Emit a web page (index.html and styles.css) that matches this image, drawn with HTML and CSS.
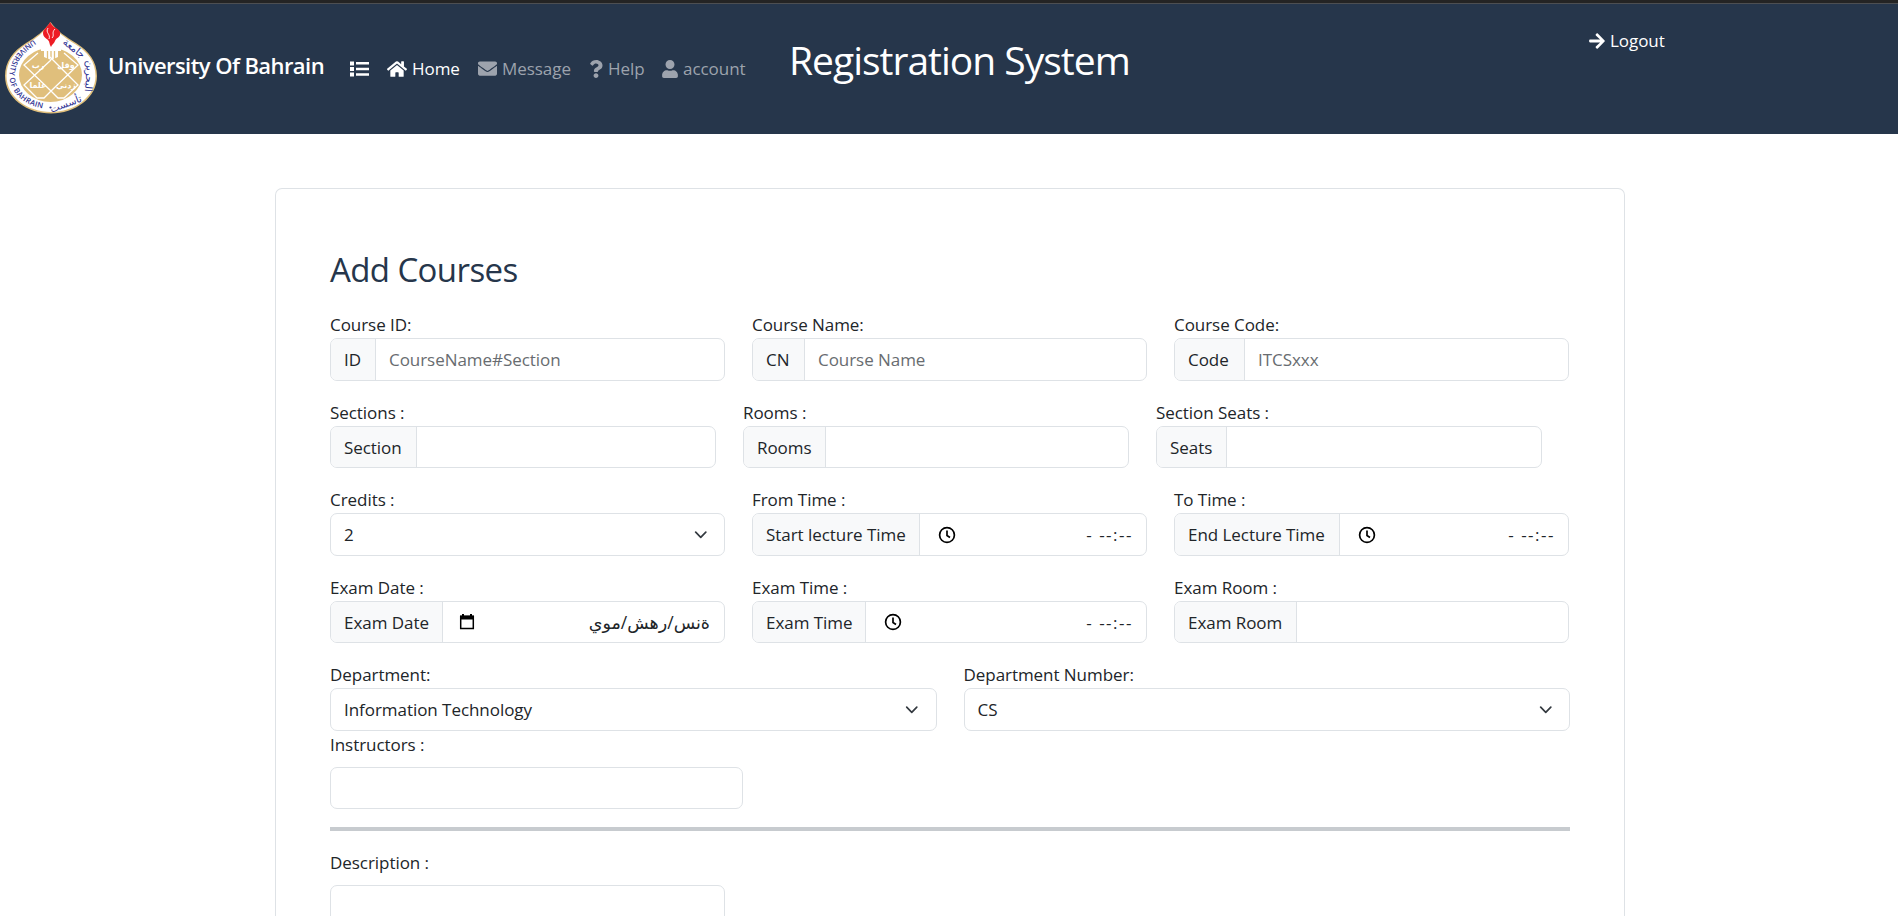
FILE: index.html
```html
<!DOCTYPE html>
<html lang="en">
<head>
<meta charset="utf-8">
<title>Registration System</title>
<link rel="stylesheet" href="styles.css">
</head>
<body>
<header class="navbar">
  <svg class="logo" viewBox="5 22 92 92">
    <path d="M50.5 22C57 31 66 37 76 43C89 51 97 62 97 76C97 98 75 113.500 51 113.500S5 98 5 76C5 62 13 51 26 43C36 37 44 31 50.500 22Z" fill="#e0bf7c"/>
    <path d="M50.5 23C57 32 65 38 75 44C88 52 95.500 62 95.500 76C95.500 97 74 112 51 112S6.500 97 6.500 76C6.500 62 14 52 27 44C37 38 44 32 50.500 23Z" fill="#fff"/>
    <ellipse cx="50.500" cy="75" rx="31.500" ry="27" fill="#e0bf7c"/>
    <path d="M41 47h20v4h-3v6l-7 3-7-3V51h-3z" fill="#fff"/>
    <path d="M47.500 51v8M51 51v8M54.500 51v8" stroke="#e0bf7c" stroke-width="1.300"/>
    <path d="M50 22c2 3 2 3 4 5 4 2 7 4 6 8-1 3-4 3-5 6-1 3-3 3-4 6-2-3-1-5-3-7s-5-3-5-7c0-4 5-6 7-11z" fill="#ed1c24"/>
    <path d="M48 28c-3 5 3 6 1 11M55 29c-4 4 0 6-3 9" fill="none" stroke="#fff" stroke-width=".9"/>
    <g fill="none" stroke="#fff" stroke-width="1.300">
      <path d="M38 53L24 65L51 91L58 98L64 98L78 85L50 57M64 53L78 65L51 91L44 98L37 98L24 85L51 60"/>
    </g>
    <g class="logo-words">
      <text x="66" y="68">وقل</text>
      <text x="38" y="68">رب</text>
      <text x="66" y="88">زدني</text>
      <text x="38" y="88">علما</text>
    </g>
    <path id="ring" d="M34.500 39C20 48 9.500 59 9.500 76C9.500 92 24 107 48 109" fill="none"/>
    <text class="logo-ring"><textPath href="#ring" startOffset="1" textLength="96" lengthAdjust="spacing">UNIVERSITY OF BAHRAIN</textPath></text>
    <circle cx="50.500" cy="107.500" r="1.100" fill="#2e3192"/>
    <g class="logo-arabic">
      <text transform="translate(72 51) rotate(38)">جامعة</text>
      <text transform="translate(86 76) rotate(94)">البحرين</text>
      <text transform="translate(67 107) rotate(-20)">تأسست</text>
    </g>
  </svg>
  <span class="brand">University Of Bahrain</span>
  <nav class="links">
    <a class="on"><svg class="i-list" viewBox="0 0 19 16"><path d="M0 .5h4v4H0zM0 6h4v4H0zM0 11.500h4v4H0zM6 1h13v2.500H6zM6 6.700h13v2.500H6zM6 12.300h13v2.500H6z"/></svg></a>
    <a class="on home"><svg class="i-home" viewBox="0 0 576 512"><path d="M280.370 148.260L96 300.110V464a16 16 0 0 0 16 16l112.060-.29a16 16 0 0 0 15.920-16V368a16 16 0 0 1 16-16h64a16 16 0 0 1 16 16v95.640a16 16 0 0 0 16 16.050L464 480a16 16 0 0 0 16-16V300L295.670 148.260a12.190 12.190 0 0 0-15.300 0zM571.600 251.470L488 182.560V44.050a12 12 0 0 0-12-12h-56a12 12 0 0 0-12 12v72.610L318.470 43a48 48 0 0 0-61 0L4.340 251.470a12 12 0 0 0-1.600 16.900l25.500 31A12 12 0 0 0 45.150 301l235.220-193.740a12.190 12.190 0 0 1 15.300 0L530.900 301a12 12 0 0 0 16.900-1.600l25.500-31a12 12 0 0 0-1.700-16.930z"/></svg>Home</a>
    <a class="message"><svg class="i-mail" viewBox="0 0 512 512"><path d="M502.300 190.800c3.900-3.100 9.700-.2 9.700 4.700V400c0 26.500-21.500 48-48 48H48c-26.500 0-48-21.500-48-48V195.600c0-5 5.700-7.800 9.700-4.700 22.400 17.400 52.100 39.500 154.100 113.600 21.100 15.400 56.700 47.800 92.200 47.600 35.700.3 72-32.800 92.300-47.600 102-74.100 131.600-96.300 154-113.700zM256 320c23.200.4 56.600-29.200 73.400-41.400 132.700-96.300 142.800-104.700 173.400-128.700 5.800-4.500 9.200-11.500 9.200-18.900v-19c0-26.500-21.500-48-48-48H48c-26.500 0-48 21.500-48 48v19c0 7.400 3.400 14.300 9.200 18.900 30.600 23.900 40.700 32.400 173.400 128.700 16.800 12.200 50.200 41.800 73.400 41.400z"/></svg>Message</a>
    <a class="help"><svg class="i-help" viewBox="0 0 384 512"><path d="M202.021 0C122.202 0 70.503 32.703 29.914 91.026c-7.363 10.580-5.093 25.086 5.178 32.874l43.138 32.709c10.373 7.865 25.132 6.026 33.253-4.148 25.049-31.381 43.630-49.449 82.757-49.449 30.764 0 68.816 19.799 68.816 49.631 0 22.552-18.617 34.134-48.993 51.164-35.423 19.860-82.299 44.576-82.299 106.405V320c0 13.255 10.745 24 24 24h72.471c13.255 0 24-10.745 24-24v-5.773c0-42.860 125.268-44.645 125.268-160.627C377.504 66.256 286.902 0 202.021 0zM192 373.459c-38.196 0-69.271 31.075-69.271 69.271 0 38.195 31.075 69.270 69.271 69.270s69.271-31.075 69.271-69.271-31.075-69.270-69.271-69.270z"/></svg>Help</a>
    <a class="account"><svg class="i-user" viewBox="0 0 448 512"><path d="M224 256c70.700 0 128-57.300 128-128S294.700 0 224 0 96 57.300 96 128s57.300 128 128 128zm89.600 32h-16.700c-22.200 10.200-46.900 16-72.900 16s-50.600-5.800-72.900-16h-16.700C60.200 288 0 348.200 0 422.400V464c0 26.500 21.500 48 48 48h352c26.500 0 48-21.500 48-48v-41.600c0-74.200-60.200-134.400-134.400-134.400z"/></svg>account</a>
  </nav>
  <h1 class="title">Registration System</h1>
  <a class="logout"><svg class="i-arrow" viewBox="0 0 448 512"><path d="M190.500 66.900l22.200-22.200c9.400-9.400 24.600-9.400 33.900 0L441 239c9.400 9.400 9.400 24.600 0 33.900L246.600 467.300c-9.400 9.400-24.600 9.400-33.900 0l-22.200-22.200c-9.500-9.500-9.300-25 .4-34.300L311.400 296H24c-13.300 0-24-10.700-24-24v-32c0-13.300 10.700-24 24-24h287.400L190.900 101.200c-9.800-9.300-10-24.800-.4-34.300z"/></svg>Logout</a>
</header>

<main class="card">
  <h2 class="heading">Add Courses</h2>
  <div class="row">
    <div><label>Course ID:</label><div class="group"><span class="addon a-id">ID</span><input class="field" placeholder="CourseName#Section"></div></div>
    <div><label>Course Name:</label><div class="group"><span class="addon a-cn">CN</span><input class="field" placeholder="Course Name"></div></div>
    <div><label>Course Code:</label><div class="group"><span class="addon a-code">Code</span><input class="field" placeholder="ITCSxxx"></div></div>
  </div>
  <div class="row inset">
    <div><label>Sections :</label><div class="group"><span class="addon a-section">Section</span><input class="field"></div></div>
    <div><label>Rooms :</label><div class="group"><span class="addon a-rooms">Rooms</span><input class="field"></div></div>
    <div><label>Section Seats :</label><div class="group"><span class="addon a-seats">Seats</span><input class="field"></div></div>
  </div>
  <div class="row">
    <div><label>Credits :</label><div class="group select"><span>2</span><svg class="chev" viewBox="0 0 16 16"><path d="m2 5 6 6 6-6"/></svg></div></div>
    <div><label>From Time :</label><div class="group"><span class="addon a-start">Start lecture Time</span><div class="field picker"><svg class="clock" viewBox="0 0 18 18"><circle cx="9" cy="9" r="7.400"/><path d="M9 4.500V9.500L12 11.500"/></svg><span class="time">- --:--</span></div></div></div>
    <div><label>To Time :</label><div class="group"><span class="addon a-end">End Lecture Time</span><div class="field picker"><svg class="clock" viewBox="0 0 18 18"><circle cx="9" cy="9" r="7.400"/><path d="M9 4.500V9.500L12 11.500"/></svg><span class="time">- --:--</span></div></div></div>
  </div>
  <div class="row">
    <div><label>Exam Date :</label><div class="group"><span class="addon a-date">Exam Date</span><div class="field picker"><svg class="cal" viewBox="0 0 18 18"><path d="M2.700 3.500h12.600v12H2.700z" fill="none" stroke="#000" stroke-width="1.500"/><path d="M2 2.500h14V6.500H2zM4 1h2v2H4zM12 1h2v2h-2z"/></svg><span class="date" dir="rtl" lang="ar">ةنس/رهش/موي</span></div></div></div>
    <div><label>Exam Time :</label><div class="group"><span class="addon a-time">Exam Time</span><div class="field picker"><svg class="clock" viewBox="0 0 18 18"><circle cx="9" cy="9" r="7.400"/><path d="M9 4.500V9.500L12 11.500"/></svg><span class="time">- --:--</span></div></div></div>
    <div><label>Exam Room :</label><div class="group"><span class="addon a-room">Exam Room</span><input class="field"></div></div>
  </div>
  <div class="row two">
    <div><label>Department:</label><div class="group select"><span>Information Technology</span><svg class="chev" viewBox="0 0 16 16"><path d="m2 5 6 6 6-6"/></svg></div></div>
    <div><label>Department Number:</label><div class="group select"><span>CS</span><svg class="chev" viewBox="0 0 16 16"><path d="m2 5 6 6 6-6"/></svg></div></div>
  </div>
  <label class="spaced">Instructors :</label>
  <div class="group instructors"><input class="field"></div>
  <hr>
  <label class="spaced">Description :</label>
  <div class="group description"></div>
</main>
</body>
</html>
```
FILE: styles.css
```css
* { box-sizing: border-box; }
body {
  margin: 0;
  height: 916px;
  overflow: hidden;
  background: #fff;
  color: #212529;
  font: 400 17px/27px "Open Sans", "Noto Sans", "DejaVu Sans", sans-serif;
  letter-spacing: -0.050px;
}
.navbar {
  height: 134px;
  border-top: 3px solid #242424;
  background: #26364b;
  box-shadow: inset 0 1px #4d4f52;
  color: #fff;
  display: flex;
  align-items: flex-start;
  padding: 1px 0 0 5px;
}
.logo { width: 92px; height: 92px; margin-top: 18px; flex: none; }
.logo-ring { font: 600 7.500px "Open Sans", sans-serif; fill: #2e3192; letter-spacing: 0; }
.logo-arabic text { font: 400 10px "DejaVu Sans", sans-serif; fill: #2e3192; text-anchor: middle; letter-spacing: 0; }
.logo-words text { font: 700 8px "DejaVu Sans", sans-serif; fill: #fff; text-anchor: middle; letter-spacing: 0; }
.brand { margin: 48px 0 0 11px; width: 242px; font-size: 22px; font-weight: 600; white-space: nowrap; letter-spacing: -0.570px; }
.links { display: flex; margin-top: 51px; width: 440px; }
.links a { display: flex; align-items: center; color: #9da3ad; white-space: nowrap; height: 27px; }
.links a.on { color: #fff; }
.links svg, .logout svg { fill: currentColor; flex: none; }
.i-list { width: 19px; height: 16px; margin-right: 18px; }
.home { width: 91px; }
.message { width: 111px; }
.help { width: 73px; }
.i-home { width: 20px; height: 18px; margin-right: 5px; }
.i-mail { width: 19px; height: 19px; margin-right: 5px; }
.i-help { width: 14px; height: 18px; margin-right: 5px; }
.i-user { width: 16px; height: 18px; margin-right: 5px; }
.title { margin: 32px 0 0 -1px; width: 800px; font-size: 39px; line-height: 48px; font-weight: 400; letter-spacing: -1px; }
.logout { display: flex; align-items: center; margin-top: 23px; }
.i-arrow { width: 16px; height: 18px; margin-right: 5px; }
.card {
  width: 1350px;
  height: 728px;
  margin: 54px 0 0 275px;
  padding: 61px 54px 0;
  border: 1px solid #dee2e6;
  border-bottom: 0;
  border-radius: 7px 7px 0 0;
  overflow: hidden;
}
.heading { margin: 0 0 20.800px; font-size: 33px; line-height: 40.500px; font-weight: 400; color: #26364b; letter-spacing: -0.600px; }
.row { display: grid; grid-template-columns: repeat(3, 1fr); gap: 27px; margin-bottom: 18px; padding-right: 1px; }
.row.inset { padding-right: 28px; }
.row.two { grid-template-columns: repeat(2, 1fr); margin-bottom: 0; padding-right: 0; }
label { display: block; height: 27px; }
.spaced { margin-bottom: 9px; }
.group { display: flex; height: 42.500px; border: 1px solid #dee2e6; border-radius: 7px; overflow: hidden; background: #fff; }
.addon { flex: none; padding: 7px 0 0 13px; background: #f8f9fa; border-right: 1px solid #dee2e6; white-space: nowrap; }
.field { flex: 1; min-width: 0; border: 0; outline: 0; padding: 0 13px; font: inherit; letter-spacing: inherit; color: inherit; background: none; }
.field::placeholder { color: #686c70; opacity: 1; }
.a-id { width: 45px; }
.a-cn { width: 52px; }
.a-code { width: 70px; }
.a-section { width: 86px; }
.a-rooms { width: 82px; }
.a-seats { width: 70px; }
.a-start { width: 167px; }
.a-end { width: 165px; }
.a-date { width: 112px; }
.a-time { width: 113px; }
.a-room { width: 122px; }
.select { align-items: center; justify-content: space-between; padding: 0 13px; }
.chev { width: 13.500px; height: 13.500px; margin-right: 4px; fill: none; stroke: #343a40; stroke-width: 2; stroke-linecap: round; stroke-linejoin: round; }
.picker { display: flex; align-items: center; justify-content: space-between; padding: 0 14px 0 18px; }
.clock { width: 18px; height: 18px; fill: none; stroke: #000; stroke-width: 1.700; }
.cal { width: 18px; height: 18px; margin-left: -3px; }
.time { letter-spacing: 1.500px; margin-right: -1px; }
.date { letter-spacing: 0; font-size: 17.500px; }
.instructors { width: 413px; }
.description { width: 395px; }
hr { height: 4px; border: 0; margin: 17.500px 0 18px; background: #c7cbcf; }
```
